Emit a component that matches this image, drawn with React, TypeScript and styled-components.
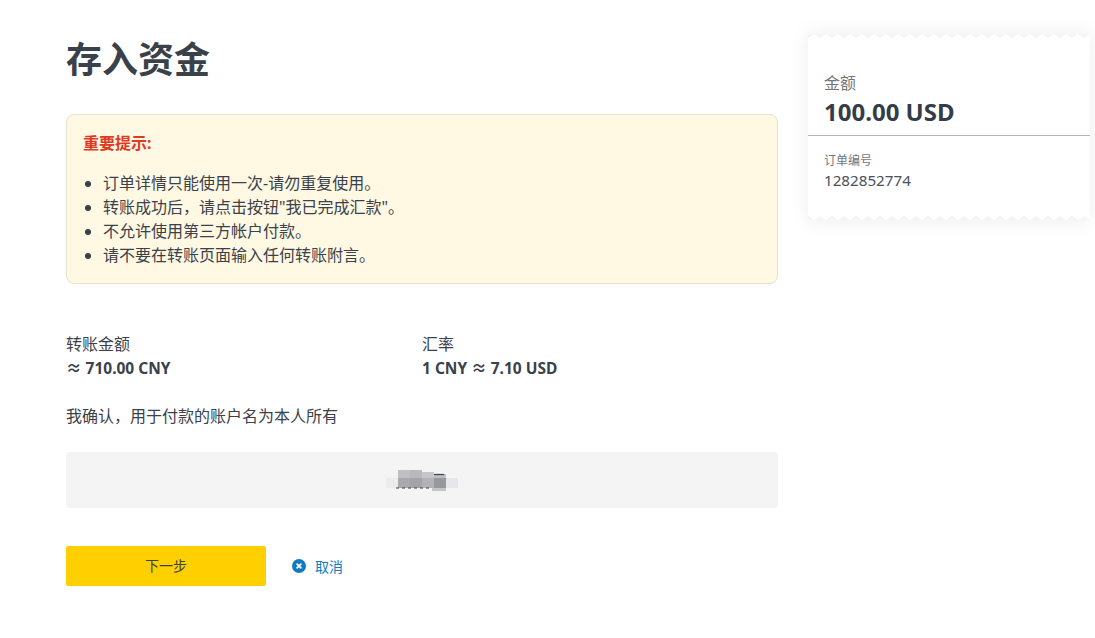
import React from 'react';
import styled, { createGlobalStyle } from 'styled-components';

const GlobalStyle = createGlobalStyle`
  html, body {
    margin: 0;
    padding: 0;
    background: #fff;
    color: #3a4149;
    font-family: "Noto Sans", "Noto Sans CJK SC", sans-serif;
  }
`;

const Page = styled.div`
  display: flex;
  align-items: flex-start;
  gap: 30px;
  width: 1095px;
  height: 638px;
  padding-left: 66px;
  box-sizing: border-box;
  overflow: hidden;
`;

const Main = styled.main`
  width: 712px;
  flex-shrink: 0;
`;

const Title = styled.h1`
  margin: 36px 0 0;
  height: 48px;
  font-size: 36px;
  line-height: 48px;
  font-weight: 700;
`;

const Notice = styled.section`
  margin-top: 30px;
  height: 170px;
  box-sizing: border-box;
  padding: 16px 16px 0;
  background: #fff8e3;
  border: 1px solid #e8e3cf;
  border-radius: 8px;
  font-size: 16px;
`;

const NoticeTitle = styled.div`
  color: #e03a22;
  font-weight: 700;
  line-height: 24px;
`;

const NoticeList = styled.ul`
  margin: 16px 0 0;
  padding: 0 0 0 20px;
  line-height: 24px;
`;

const Rates = styled.div`
  display: grid;
  grid-template-columns: 356px 1fr;
  margin-top: 48px;
  font-size: 16px;
  line-height: 24px;
`;

const Strong = styled.div`
  font-size: 15.5px;
  font-weight: 700;
`;

const Confirm = styled.p`
  margin: 24px 0 0;
  font-size: 16px;
  line-height: 24px;
`;

const NameBox = styled.div`
  display: flex;
  align-items: center;
  justify-content: center;
  height: 56px;
  margin-top: 24px;
  background: #f4f4f4;
  border-radius: 4px;
`;

const Actions = styled.div`
  display: flex;
  align-items: center;
  gap: 26px;
  margin-top: 38px;
`;

const NextButton = styled.button`
  width: 200px;
  height: 40px;
  padding: 0 0 2px;
  border: 0;
  border-radius: 2px;
  background: #ffcf00;
  color: #3a4149;
  font: inherit;
  font-size: 14px;
`;

const CancelLink = styled.a`
  display: flex;
  align-items: center;
  gap: 9px;
  color: #0f7bc0;
  font-size: 14px;
`;

const Receipt = styled.aside`
  position: relative;
  width: 282px;
  height: 186px;
  margin-top: 34px;
  flex-shrink: 0;
  background: #fff;
  box-shadow: 0 0 20px rgba(0, 0, 0, 0.08);

  &::before,
  &::after {
    content: "";
    position: absolute;
    left: 0;
    right: 0;
    height: 4px;
    background-size: 12px 8px;
    background-repeat: repeat-x;
  }

  &::before {
    top: 0;
    background-image: linear-gradient(to bottom right, #f5f5f5 25%, transparent 25%),
      linear-gradient(to bottom left, #f5f5f5 25%, transparent 25%);
    background-position: top left;
  }

  &::after {
    bottom: 0;
    background-image: linear-gradient(to top right, #f5f5f5 25%, transparent 25%),
      linear-gradient(to top left, #f5f5f5 25%, transparent 25%);
    background-position: bottom left;
  }
`;

const AmountBlock = styled.div`
  height: 102px;
  box-sizing: border-box;
  padding: 37px 16px 0;
  border-bottom: 1px solid #b4b4b4;
`;

const AmountLabel = styled.div`
  font-size: 16px;
  line-height: 24px;
  color: #757575;
`;

const AmountValue = styled.div`
  font-size: 24px;
  line-height: 34px;
  font-weight: 700;
  color: #333d47;
`;

const OrderBlock = styled.div`
  padding: 16px 16px 0;
`;

const OrderLabel = styled.div`
  font-size: 12px;
  line-height: 18px;
  color: #757575;
`;

const OrderValue = styled.div`
  font-size: 15.2px;
  line-height: 20px;
  color: #4a525a;
`;

const cells = [
  [398, 470, 12, 8, '#c0c0c3'],
  [410, 470, 12, 8, '#b8b9bd'],
  [422, 472, 12, 6, '#c6c6c8'],
  [434, 474, 12, 4, '#bdbdc1'],
  [386, 478, 12, 10, '#ececec'],
  [398, 478, 12, 10, '#a9a9ac'],
  [410, 478, 12, 10, '#a3a4a8'],
  [422, 478, 12, 10, '#b3b3b5'],
  [434, 478, 12, 10, '#97989c'],
  [446, 478, 12, 10, '#e6e7ea'],
  [432, 488, 14, 3, '#c4c5c8'],
] as const;

function BlurredName() {
  return (
    <svg width="72" height="21" viewBox="386 470 72 21" aria-hidden="true">
      {cells.map(([x, y, w, h, fill]) => (
        <rect key={`${x}-${y}`} x={x} y={y} width={w} height={h} fill={fill} />
      ))}
      <path d="M396 488h36" stroke="#3a4149" strokeWidth="1.2" strokeDasharray="3 3" />
      <path d="M434 474.5h10" stroke="#3a4149" strokeWidth="1.2" />
    </svg>
  );
}

function CancelIcon() {
  return (
    <svg width="14" height="14" viewBox="0 0 14 14" aria-hidden="true">
      <circle cx="7" cy="7" r="7" fill="#0f7bc0" />
      <path d="M4.6 4.6l4.8 4.8M9.4 4.6l-4.8 4.8" stroke="#fff" strokeWidth="1.6" />
    </svg>
  );
}

export default function App() {
  return (
    <>
      <GlobalStyle />
      <Page>
        <Main>
          <Title>存入资金</Title>
          <Notice>
            <NoticeTitle>重要提示:</NoticeTitle>
            <NoticeList>
              <li>订单详情只能使用一次-请勿重复使用。</li>
              <li>{'转账成功后\uFF0C请点击按钮"我已完成汇款"。'}</li>
              <li>不允许使用第三方帐户付款。</li>
              <li>请不要在转账页面输入任何转账附言。</li>
            </NoticeList>
          </Notice>
          <Rates>
            <div>
              <div>转账金额</div>
              <Strong>≈ 710.00 CNY</Strong>
            </div>
            <div>
              <div>汇率</div>
              <Strong>1 CNY ≈ 7.10 USD</Strong>
            </div>
          </Rates>
          <Confirm>{'我确认\uFF0C用于付款的账户名为本人所有'}</Confirm>
          <NameBox>
            <BlurredName />
          </NameBox>
          <Actions>
            <NextButton>下一步</NextButton>
            <CancelLink>
              <CancelIcon />
              取消
            </CancelLink>
          </Actions>
        </Main>
        <Receipt>
          <AmountBlock>
            <AmountLabel>金额</AmountLabel>
            <AmountValue>100.00 USD</AmountValue>
          </AmountBlock>
          <OrderBlock>
            <OrderLabel>订单编号</OrderLabel>
            <OrderValue>1282852774</OrderValue>
          </OrderBlock>
        </Receipt>
      </Page>
    </>
  );
}
